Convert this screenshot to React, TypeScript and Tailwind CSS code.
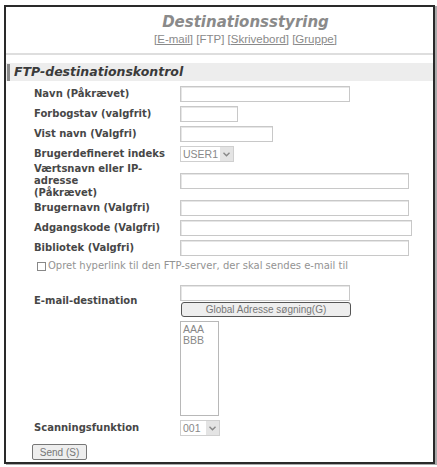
import React from "react";

const Box = ({ w }: { w: string }) => (
  <div className={`h-[16px] ${w} border border-[#c8c8c8] bg-white shadow-[inset_1px_1px_0_#e6e6e6]`} />
);

const Label = ({ children }: { children: React.ReactNode }) => (
  <div className="font-['DejaVu_Sans',sans-serif] font-bold text-[10px] leading-[12px] text-[#474747]">{children}</div>
);

const Select = ({ text, w }: { text: string; w: string }) => (
  <div className={`h-[16px] ${w} border border-[#cfcfcf] bg-white flex items-center`}>
    <span className="flex-1 pl-[2px] font-['Liberation_Sans',sans-serif] text-[10.5px] leading-[14px] text-[#888]">{text}</span>
    <span className="w-[13px] h-full bg-[#e4e4e4] flex items-center justify-center">
      <svg width="7" height="5" viewBox="0 0 7 5"><path d="M0.5 0.8 L3.5 3.8 L6.5 0.8" fill="none" stroke="#888" strokeWidth="1.4" /></svg>
    </span>
  </div>
);

export default function App() {
  return (
    <div className="w-[437px] h-[467px] bg-white pt-[5px] pl-[4px]">
      <div className="w-[431px] h-[459px] border-2 border-[#2a2a2a] shadow-[2px_1px_0_#aaa] flex flex-col">
        <div className="pl-[52px] pt-[6px] flex flex-col items-center">
          <div className="font-['DejaVu_Sans',sans-serif] font-bold italic text-[15px] leading-[18px] text-[#8a8a8a]">Destinationsstyring</div>
          <div className="mt-[2px] font-['Liberation_Sans',sans-serif] text-[11.5px] leading-[13px] text-[#8a8a8a]">
            <span className="underline">[E-mail]</span> [FTP] <span className="underline">[Skrivebord]</span> <span className="underline">[Gruppe]</span>
          </div>
        </div>
        <div className="mt-[7px] h-[2px] bg-[#dedede]" />
        <div className="mt-[8px] h-[18px] bg-[#ededed] flex items-center">
          <div className="ml-[1px] w-[3px] h-[17px] bg-[#8a8a8a]" />
          <div className="ml-[4px] font-['DejaVu_Sans',sans-serif] font-bold italic text-[12.5px] leading-[18px] text-[#3a3a3a]">FTP-destinationskontrol</div>
        </div>
        <div className="pl-[28px] pt-[5px] grid grid-cols-[146px_1fr] gap-y-[4px] items-center">
          <Label>Navn (Påkrævet)</Label>
          <Box w="w-[170px]" />
          <Label>Forbogstav (valgfrit)</Label>
          <Box w="w-[58px]" />
          <Label>Vist navn (Valgfri)</Label>
          <Box w="w-[93px]" />
          <Label>Brugerdefineret indeks</Label>
          <Select text="USER1" w="w-[54px]" />
          <div className="-my-[3px]"><Label>Værtsnavn eller IP-<br />adresse<br />(Påkrævet)</Label></div>
          <Box w="w-[229px]" />
          <Label>Brugernavn (Valgfri)</Label>
          <Box w="w-[229px]" />
          <Label>Adgangskode (Valgfri)</Label>
          <Box w="w-[232px]" />
          <Label>Bibliotek (Valgfri)</Label>
          <Box w="w-[229px]" />
        </div>
        <div className="pl-[31px] mt-[4px] flex items-center">
          <div className="w-[9px] h-[9px] border border-[#888] bg-white" />
          <span className="ml-[2px] font-['DejaVu_Sans',sans-serif] text-[10px] leading-[12px] text-[#939393]">Opret hyperlink til den FTP-server, der skal sendes e-mail til</span>
        </div>
        <div className="pl-[28px] mt-[13px] grid grid-cols-[146px_1fr]">
          <div className="pt-[10px]"><Label>E-mail-destination</Label></div>
          <div className="flex flex-col">
            <Box w="w-[170px]" />
            <div className="mt-[1px] ml-[1px] w-[170px] h-[15px] rounded-[3px] border-[1.5px] border-[#555] bg-[#eeeeee] flex items-center justify-center font-['Liberation_Sans',sans-serif] text-[10px] text-[#777]">Global Adresse søgning(G)</div>
            <div className="mt-[4px] w-[39px] h-[95px] border border-[#b8b8b8] bg-white pl-[2px] pt-[2px] font-['Liberation_Sans',sans-serif] text-[10.5px] leading-[11px] text-[#888]">
              <div>AAA</div>
              <div>BBB</div>
            </div>
          </div>
        </div>
        <div className="pl-[28px] mt-[4px] grid grid-cols-[146px_1fr] items-center">
          <Label>Scanningsfunktion</Label>
          <Select text="001" w="w-[40px]" />
        </div>
        <div className="pl-[26px] mt-[8px]">
          <div className="w-[55px] h-[16px] rounded-[2px] border border-[#777] bg-[#eeeeee] flex items-center justify-center font-['Liberation_Sans',sans-serif] text-[10px] text-[#777]">Send (S)</div>
        </div>
      </div>
    </div>
  );
}
